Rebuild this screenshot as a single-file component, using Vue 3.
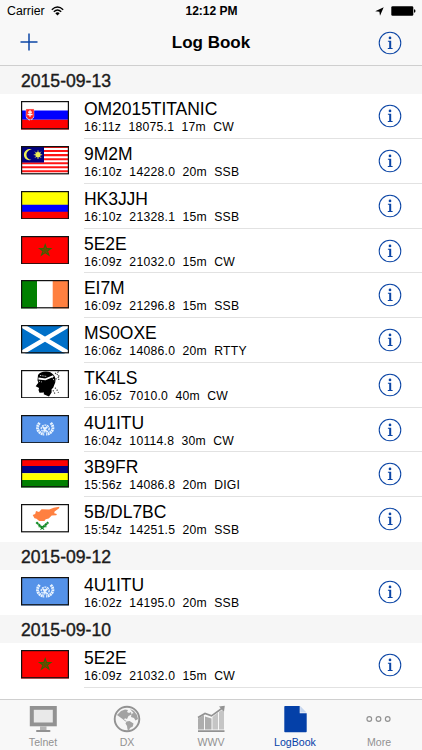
<script setup>
import { ref } from 'vue'

const sections = [
  {
    date: '2015-09-13',
    logs: [
      { flag: 'slovakia', call: 'OM2015TITANIC', time: '16:11z', freq: '18075.1', band: '17m', mode: 'CW' },
      { flag: 'malaysia', call: '9M2M', time: '16:10z', freq: '14228.0', band: '20m', mode: 'SSB' },
      { flag: 'colombia', call: 'HK3JJH', time: '16:10z', freq: '21328.1', band: '15m', mode: 'SSB' },
      { flag: 'morocco', call: '5E2E', time: '16:09z', freq: '21032.0', band: '15m', mode: 'CW' },
      { flag: 'ireland', call: 'EI7M', time: '16:09z', freq: '21296.8', band: '15m', mode: 'SSB' },
      { flag: 'scotland', call: 'MS0OXE', time: '16:06z', freq: '14086.0', band: '20m', mode: 'RTTY' },
      { flag: 'corsica', call: 'TK4LS', time: '16:05z', freq: '7010.0', band: '40m', mode: 'CW' },
      { flag: 'un', call: '4U1ITU', time: '16:04z', freq: '10114.8', band: '30m', mode: 'CW' },
      { flag: 'mauritius', call: '3B9FR', time: '15:56z', freq: '14086.8', band: '20m', mode: 'DIGI' },
      { flag: 'cyprus', call: '5B/DL7BC', time: '15:54z', freq: '14251.5', band: '20m', mode: 'SSB' }
    ]
  },
  {
    date: '2015-09-12',
    logs: [
      { flag: 'un', call: '4U1ITU', time: '16:02z', freq: '14195.0', band: '20m', mode: 'SSB' }
    ]
  },
  {
    date: '2015-09-10',
    logs: [
      { flag: 'morocco', call: '5E2E', time: '16:09z', freq: '21032.0', band: '15m', mode: 'CW' }
    ]
  }
]

const tabs = ['Telnet', 'DX', 'WWV', 'LogBook', 'More']
const activeTab = ref('LogBook')

const detail = (log) => [log.time, log.freq, log.band, log.mode].join('  ')
</script>

<template>
  <div class="app">
    <!-- shared info symbol -->
    <svg class="defs" width="0" height="0">
      <symbol id="info" viewBox="0 0 24 24">
        <circle cx="12" cy="12" r="10.8" fill="none" stroke="currentColor" stroke-width="1.05" />
        <circle cx="12" cy="6.9" r="1.35" fill="currentColor" />
        <path d="M9.9 9.8h3.3v7.3h1.4v.9H9.8v-.9h1.4v-6.4H9.900z" fill="currentColor" />
      </symbol>
    </svg>

    <header class="top">
      <div class="status">
        <div class="status__left">
          <span>Carrier</span>
          <svg width="13" height="10" viewBox="0 0 13 10">
            <path d="M.8 3.7Q6.5-1.5 12.2 3.7M2.8 5.8Q6.5 2.3 10.2 5.8" fill="none" stroke="#000" stroke-width="1.4" />
            <path d="M4.3 7.2Q6.5 5.3 8.7 7.2L6.5 9.5z" />
          </svg>
        </div>
        <div class="status__time">12:12 PM</div>
        <div class="status__right">
          <svg width="9" height="9" viewBox="0 0 9 9"><path d="M8.7.3L5 8.700 4.400 4.700.2 4.300z" /></svg>
          <svg width="26" height="10" viewBox="0 0 26 10">
            <rect x="1.3" y=".2" width="22" height="9.6" rx="1.3" />
            <path d="M24 3.200q1.500.2 1.500 1.800t-1.500 1.800z" />
          </svg>
        </div>
      </div>
      <nav class="nav">
        <button class="nav__add">
          <svg width="18" height="18" viewBox="0 0 18 18"><path d="M9 .5v17M.5 9h17" stroke="currentColor" stroke-width="1.5" /></svg>
        </button>
        <h1 class="nav__title">Log Book</h1>
        <button class="info"><svg width="24" height="24"><use href="#info" /></svg></button>
      </nav>
    </header>

    <main class="list">
      <section v-for="section in sections" :key="section.date">
        <h2 class="date">{{ section.date }}</h2>
        <div v-for="log in section.logs" :key="log.call" class="row">
          <svg class="flag" width="48" height="28.4" viewBox="0 0 48 28" preserveAspectRatio="none">
            <g v-if="log.flag === 'slovakia'">
              <path fill="#fff" d="M0 0h48v28H0z" />
              <path fill="#00f" d="M0 9.3h48v9.3H0z" />
              <path fill="#f00" d="M0 18.6h48V28H0z" />
              <path fill="#f22" stroke="#fcc" stroke-width=".4" d="M5 8h8v7q0 2.300-4 3.600-4-1.300-4-3.600z" />
              <path stroke="#fff" stroke-width="1.3" d="M9 9v6.500M7 11h4M6.500 13.300h5" />
              <path fill="none" stroke="#bcf" stroke-dasharray="2 1" d="M5.400 15.700q1.100 3 3.600 3t3.600-3" />
            </g>
            <g v-else-if="log.flag === 'malaysia'">
              <path fill="#fff" d="M0 0h48v28H0z" />
              <path v-for="n in 7" :key="n" fill="#ff1515" :d="`M0 ${(n - 1) * 4}h48v2H0z`" />
              <path fill="#000080" d="M0 0h23v16.3H0z" />
              <path fill="#ee5" d="M11 3.7a5.5 5.5 0 1 0 0 9.7 4.9 4.9 0 1 1 0-9.7z" />
              <circle cx="17" cy="8.6" r="2.6" fill="#ee5" />
              <path stroke="#ee5" stroke-width=".8" d="M17 4.400v8.400M12.800 8.600h8.400M14 5.600l6 6M20 5.600l-6 6" />
            </g>
            <g v-else-if="log.flag === 'colombia'">
              <path fill="#ff0" d="M0 0h48v14H0z" />
              <path fill="#00f" d="M0 13.6h48v7H0z" />
              <path fill="#f00" d="M0 20.5h48V28H0z" />
            </g>
            <g v-else-if="log.flag === 'morocco'">
              <path fill="#f00" d="M0 0h48v28H0z" />
              <path fill="#a62a00" stroke="#356600" stroke-width="1.1" d="M24.2 8.6l1.4 3.8h4.2l-3.4 2.4 1.5 4-3.7-2.4-3.7 2.4 1.5-4-3.4-2.4h4.2z" />
              <circle cx="24.2" cy="14.2" r="1.8" fill="#5a5500" />
            </g>
            <g v-else-if="log.flag === 'ireland'">
              <path fill="#008000" d="M0 0h16v28H0z" />
              <path fill="#fff" d="M16 0h16v28H16z" />
              <path fill="#ff8040" d="M31.7 0H48v28H31.7z" />
            </g>
            <g v-else-if="log.flag === 'scotland'">
              <path fill="#0070c8" d="M0 0h48v28H0z" />
              <path stroke="#fff" stroke-width="4.4" d="M0 0l48 28M48 0L0 28" />
            </g>
            <g v-else-if="log.flag === 'corsica'">
              <path fill="#fff" d="M0 0h48v28H0z" />
              <path d="M17 5q2-3.600 8-3.600 5 0 7.500 3.300 2.600 3 1.800 7.300l-2.100 5.400-1.600 1.700v3L28 26.200l-5.300-2.400.3-1.600-4.500.2-1-2.700.6-2-3.400-1.600 2.600-3.500-.8-2.400z" />
              <path fill="none" stroke="#fff" stroke-width="1.8" d="M17.400 8.400l7 .8 8-3.300" />
              <path fill="none" stroke="#fff" stroke-width=".8" stroke-dasharray="1.3 1" d="M19 5.400l7 1M17.800 11l3 .8M31 7l2.600 4" />
              <path fill="none" stroke="#444" stroke-width="1.2" stroke-dasharray="1.2 1.4" d="M34 3.600l3-1.500-1 3 3 1M34.600 9l3-2 .2 3.200M34 17.500l2 2.200 1.500 2.700M32 20l2 3.500" />
            </g>
            <g v-else-if="log.flag === 'un'">
              <path fill="#5592e8" d="M0 0h48v28H0z" />
              <g fill="none" stroke="#e9f4ff">
                <ellipse cx="24.2" cy="13.3" rx="4" ry="3.4" stroke-width="1.3" stroke-dasharray="2 .7" />
                <path stroke-width="1.9" d="M21.800 11.800l2 1.700 2.600-1.800M22.200 15.200l3.600.2" />
                <path stroke-width="2.9" stroke-dasharray="1.9 .5" d="M18.600 7.800q-4.200 5 0 9.200 2 2 4.600 1.800M29.800 7.800q4.200 5 0 9.200-2 2-4.600 1.800" />
              </g>
            </g>
            <g v-else-if="log.flag === 'mauritius'">
              <path fill="#f00" d="M0 0h48v7H0z" />
              <path fill="#000080" d="M0 7h48v7H0z" />
              <path fill="#ff0" d="M0 14h48v7H0z" />
              <path fill="#008000" d="M0 20.7h48V28H0z" />
            </g>
            <g v-else-if="log.flag === 'cyprus'">
              <path fill="#fff" d="M0 0h48v28H0z" />
              <path fill="#ff8040" d="M11.700 10.800l2.500-1 .8-2.800 3 .8 2.600-2.600 7.600.2 4.500-1.600 5.700-1-.3 1.400-4.500 3.100-.4 1.800 2.700.7-.6 1.200-4.600.4-3 3-3 .7-1.300 1.700-5.200-.1-2.700-2.200-2-.5z" />
              <path fill="none" stroke="#128a25" stroke-width="2.200" stroke-dasharray="2.600 .3" d="M15.300 18l5.900 5.400 6.100-5.400" />
              <path fill="none" stroke="#128a25" stroke-width="1" d="M17.500 22.500h2.500M22.500 22.500h3M19.500 25.200l1.700-1.600 1.900 1.600" />
            </g>
            <rect x=".6" y=".6" width="46.8" height="26.8" fill="none" stroke="#111" stroke-width="1.2" />
          </svg>
          <div class="row__body">
            <div class="row__text">
              <div class="row__call">{{ log.call }}</div>
              <div class="row__detail">{{ detail(log) }}</div>
            </div>
            <button class="info"><svg width="24" height="24"><use href="#info" /></svg></button>
          </div>
        </div>
      </section>
    </main>

    <footer class="tabs">
      <button
        v-for="tab in tabs"
        :key="tab"
        class="tab"
        :class="{ 'tab--active': tab === activeTab }"
        @click="activeTab = tab"
      >
        <svg width="28" height="28" viewBox="0 0 28 28">
          <g v-if="tab === 'Telnet'" fill="#929292">
            <path d="M.8 1h27v20.3H.8z" />
            <path fill="#e9e9e9" d="M4.8 4.8h19v12.7h-19z" />
            <path d="M11 21.3h6.5V25H11z" fill="#b5b5b5" />
            <rect x="7" y="25" width="14.5" height="2" rx="1" />
          </g>
          <g v-else-if="tab === 'DX'" fill="#929292">
            <circle cx="14" cy="14" r="12.3" fill="#f5f5f5" stroke="#929292" stroke-width="1.9" />
            <path fill="#a2a2a2" d="M5 9l3-3 4-1.5 3 .5-1 2 2 1 2-1 .5 2.500-3 1.500-1.500 3-2-.7-1 1.200 2.500 1.500-1 .6-3-2.600L4 10z" />
            <path fill="#a2a2a2" d="M13.500 16.500l3-.5 4 2.500-.7 3-2.800 1.500-1 2.500-1.500-1-.5-3.500-1.500-2.500zM17 4l4 2 3 4 1 4-2.500 1.500-1.500-2.500-3-1 .5-3 2-1z" />
          </g>
          <g v-else-if="tab === 'WWV'">
            <path fill="#adadad" d="M1 13.5l6-3.500v14.500H1zM8 11.500l6.500 2v11H8z" />
            <path fill="#c5c5c5" d="M15.500 12l5.500-4.500v17h-5.500zM22 7l5-3v20.500h-5z" />
            <path fill="none" stroke="#929292" stroke-width="1.7" d="M1 12.500l7-4 6.500 2.400L25.500 3" />
            <path fill="#929292" d="M22 1.500l5.800-.7-.8 5.700zM1 25.200h26.500V27H1z" />
          </g>
          <g v-else-if="tab === 'LogBook'" fill="currentColor">
            <path d="M3.300 1.700q0-.7.7-.7h14.700v7.200h7v18.300q0 .7-.7.700H4q-.7 0-.7-.7z" />
            <path fill="#c6d6ef" d="M19.200 1l6.300 6.600h-6.300z" />
          </g>
          <g v-else fill="none" stroke="#929292" stroke-width="1.15">
            <circle cx="4.300" cy="14" r="2.350" />
            <circle cx="13.500" cy="14" r="2.350" />
            <circle cx="22.700" cy="14" r="2.350" />
          </g>
        </svg>
        <span>{{ tab }}</span>
      </button>
    </footer>
  </div>
</template>

<style>
body {
  margin: 0;
  overflow: hidden;
}
</style>

<style scoped>
.app {
  width: 422px;
  height: 750px;
  display: flex;
  flex-direction: column;
  overflow: hidden;
  background: #fff;
  color: #000;
  font-family: "Liberation Sans", Arial, sans-serif;
}

.defs {
  position: absolute;
}

button {
  padding: 0;
  border: 0;
  background: none;
  font-family: inherit;
  color: #0b45a5;
}

svg {
  display: block;
  flex: none;
}

.top {
  height: 65px;
  flex: none;
  background: #f8f8f8;
  border-bottom: 1px solid #cfcfcf;
}

.status {
  height: 21px;
  display: grid;
  grid-template-columns: 1fr auto 1fr;
  align-items: center;
  padding: 1px 6px 0 7px;
  box-sizing: border-box;
  font-size: 12.3px;
}

.status__left,
.status__right {
  display: flex;
  align-items: center;
  gap: 6px;
}

.status__right {
  justify-content: flex-end;
}

.status__time {
  font-size: 12px;
  font-weight: bold;
}

.nav {
  height: 44px;
  display: grid;
  grid-template-columns: 1fr auto 1fr;
  align-items: center;
  padding: 0 20px;
}

.nav__add {
  justify-self: start;
  margin-bottom: 2px;
}

.nav__title {
  margin: 0;
  font-size: 17px;
  font-weight: bold;
}

.nav .info {
  justify-self: end;
}

.list {
  flex: 1;
  min-height: 0;
  overflow: hidden;
}

.date {
  height: 28.4px;
  margin: 0;
  padding-left: 21px;
  background: #f6f6f6;
  font-size: 17.6px;
  font-weight: normal;
  line-height: 30px;
  color: #1c1c1c;
  -webkit-text-stroke: 0.4px #1c1c1c;
}

.row {
  height: 44.75px;
  display: flex;
  padding-left: 21px;
}

.flag {
  margin-top: 7px;
}

.row__body {
  flex: 1;
  display: flex;
  justify-content: space-between;
  align-items: center;
  margin-left: 15px;
  padding-right: 20px;
  border-bottom: 1px solid #e2e2e2;
}

.row:last-child .row__body {
  border-bottom-color: transparent;
}

section:last-child .row:last-child .row__body {
  border-bottom-color: #e2e2e2;
}

.row__text {
  padding-top: 2px;
}

.row__call {
  font-size: 17.5px;
  line-height: 20px;
  letter-spacing: -0.05px;
}

.row__detail {
  font-size: 12.2px;
  line-height: 16px;
  letter-spacing: 0.25px;
  white-space: pre;
}

.tabs {
  height: 50px;
  flex: none;
  display: flex;
  justify-content: space-between;
  padding: 0 1px;
  background: #f8f8f8;
  border-top: 1px solid #cfcfcf;
}

.tab {
  width: 84px;
  display: flex;
  flex-direction: column;
  align-items: center;
  padding-top: 5px;
  font-size: 10.6px;
  line-height: 15px;
  color: #929292;
}

.tab span {
  margin-top: 2px;
}

.tab--active {
  color: #0440a8;
}
</style>
